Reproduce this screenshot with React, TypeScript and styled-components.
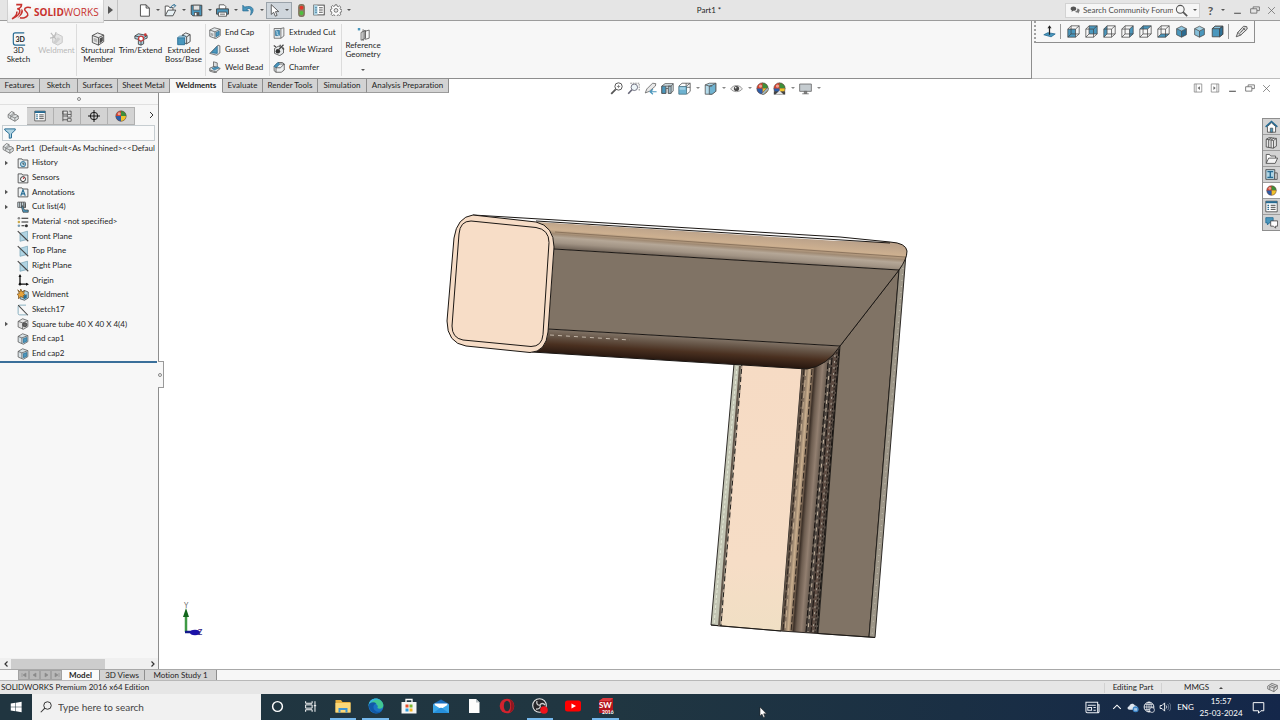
import React from "react";
import styled, { createGlobalStyle, css } from "styled-components";

const INK = "#444";
const BLUE = "#4a97bd";
const DEEP = "#256a92";
const PALE = "#b0d4e3";

const GlobalStyle = createGlobalStyle`
  *, *::before, *::after { box-sizing: border-box; }
  html, body { margin: 0; padding: 0; }
  body {
    font-family: Lato, "Open Sans", sans-serif;
    font-variant-ligatures: none;
    font-size: 8px;
    line-height: 9px;
    color: #1e1e1e;
    background: #f7f7f7;
  }
  button, input {
    font: inherit;
    font-variant-ligatures: none;
    color: inherit;
    background: none;
    border: 0;
    padding: 0;
    margin: 0;
    border-radius: 0;
  }
  svg { display: block; flex: none; }
`;

/* ---------- icons, all drawn on a 16 x 16 grid ---------- */

type Face = "front" | "back" | "left" | "right" | "top" | "bottom";

const facePoints: Record<Face, string> = {
  front: "1,5 10.5,5 10.5,15 1,15",
  back: "5,1 15,1 15,11 5,11",
  left: "1,5 5,1 5,11 1,15",
  right: "10.5,5 15,1 15,11 10.5,15",
  top: "1,5 5,1 15,1 10.5,5",
  bottom: "1,15 5,11 15,11 10.5,15",
};

const viewCube = (face: Face) => (
  <>
    <polygon points={facePoints[face]} fill={BLUE} />
    <path
      d="M1 5h9.500v10H1zM5 1h10v10H5zM1 5l4-4M10.500 5 15 1M1 15l4-4M10.500 15l4.500-4"
      fill="none"
      stroke={INK}
      strokeWidth=".9"
    />
  </>
);

const isoCube = (left: string, right: string, top: string) => (
  <>
    <path d="M2 4.500 8 7.500V15L2 12z" fill={left} />
    <path d="M14 4.500 8 7.500V15l6-3z" fill={right} />
    <path d="M2 4.500 8 1.500l6 3-6 3z" fill={top} />
    <path d="M2 4.500 8 1.500l6 3V12l-6 3-6-3zM2 4.500l6 3 6-3M8 7.500V15" fill="none" stroke={INK} strokeWidth=".9" />
  </>
);

const folder = (
  <path d="M1.500 14.500v-12h5l1 1.500h7v10.500z" fill="#eef1f2" stroke={INK} strokeWidth="1.100" />
);

const plane = (
  <>
    <path d="M4 4.500 14 1.500v11L4 15z" fill={PALE} stroke="#7aa5b8" strokeWidth="1" />
    <path d="M1 1.500 15 15" stroke={INK} strokeWidth="1.400" />
  </>
);

const ball = (
  <>
    <circle cx="8" cy="8" r="7" fill="#d9412b" />
    <path d="M8 8V1a7 7 0 0 1 7 7z" fill="#3e8f3a" />
    <path d="M8 8h7a7 7 0 0 1-7 7z" fill="#f0c22c" />
    <path d="M8 8v7a7 7 0 0 1-7-7z" fill="#2d5ea8" />
    <circle cx="5.500" cy="5" r="2" fill="#fff" opacity=".5" />
    <circle cx="8" cy="8" r="7" fill="none" stroke="#555" strokeWidth=".7" />
  </>
);

const partShape = (
  <>
    <path d="M1.500 6 6 2l3.500 1.500v3L12 6l3 2v4l-4.500 3L1.500 10z" fill="#dfe3e4" stroke="#666" strokeWidth="1" />
    <path d="M1.500 6 5 7.500l4.500-4M5 7.500v4M5 9.500l4-3M10.500 10.500v4.500M6.500 9l4 1.500L15 8" fill="none" stroke="#666" strokeWidth=".9" />
  </>
);

const icons: Record<string, React.ReactNode> = {
  newDoc: <path d="M3 1h7l4 4v10H3zM10 1v4h4" fill="#fff" stroke={INK} strokeWidth="1.100" />,
  open: (
    <>
      <path d="M1.500 14.500V2.500h4l1.500 2h4v3" fill="#fff" stroke={INK} strokeWidth="1.100" />
      <path d="M1.500 14.500 5 7.500h9.500L11 14.500z" fill="#e8f1f5" stroke={INK} strokeWidth="1.100" />
      <path d="M8 5c1-3 3-4 5-3.500M11.500 0l3 2-2.500 2.500" fill="none" stroke={DEEP} strokeWidth="1.200" />
    </>
  ),
  save: (
    <>
      <path d="M1.500 1.500h13v13h-11l-2-2z" fill={BLUE} stroke={INK} strokeWidth="1.200" />
      <path d="M4 1.500h8v6H4z" fill="#e2e2e2" stroke={INK} strokeWidth=".8" />
      <path d="M5 10h6.500v4.500H5z" fill="#555" />
      <path d="M6 11h2v3H6z" fill="#fff" />
    </>
  ),
  print: (
    <>
      <path d="M4 6V1h6l2 2v3" fill="#fff" stroke={INK} />
      <path d="M.7 6h14.600v6.500H.7z" fill={BLUE} stroke={INK} strokeWidth="1.200" />
      <path d="M3 10h10v5H3z" fill="#fff" stroke={INK} />
      <path d="M5 12.500h6" stroke={INK} />
    </>
  ),
  undo: (
    <path d="M1 1.500v7h7L5.800 6.300c4-2.200 6.700 0 4.700 7.500 6-6 3.500-13-7.300-10z" fill={BLUE} stroke={DEEP} strokeWidth=".9" />
  ),
  cursor: <path d="M4 .8v12l3-2.600 2 4.800 2.200-1-2-4.600h4z" fill="#fff" stroke={INK} strokeWidth="1" />,
  traffic: (
    <>
      <rect x="4.500" y=".5" width="7" height="15" rx="2.500" fill="#8a8066" stroke="#6b6048" />
      <circle cx="8" cy="4.500" r="2.500" fill="#e5342a" />
      <circle cx="8" cy="11.200" r="2.500" fill="#4fbf3f" />
    </>
  ),
  options: (
    <>
      <rect x="1" y="1.500" width="14" height="13" fill="#fff" stroke={INK} strokeWidth="1.200" />
      <path d="M1 1.500h5v13H1z" fill={PALE} />
      <path d="M3 5h2M3 8h2M3 11h2" stroke={DEEP} strokeWidth="1.400" />
      <path d="M8 5h5M8 8h5M8 11h5" stroke={INK} strokeWidth="1.200" />
    </>
  ),
  gear: (
    <>
      <path
        d="M6.800 1h2.400l.4 2 1.500.6 1.700-1.100 1.700 1.700-1.100 1.700.6 1.500 2 .4v2.400l-2 .4-.6 1.500 1.100 1.700-1.700 1.700-1.700-1.100-1.500.6-.4 2H6.800l-.4-2-1.500-.6-1.700 1.100-1.700-1.700 1.100-1.700L2 10.200l-1.500-.4V7.400l1.500-.4.600-1.500L1.500 3.800l1.700-1.700L4.900 3.200l1.500-.6z"
        fill="#fafafa"
        stroke={INK}
        strokeWidth=".9"
      />
      <circle cx="8" cy="8.500" r="2.500" fill="#e5e5e5" stroke={INK} strokeWidth=".9" />
    </>
  ),
  lens: (
    <>
      <circle cx="6.500" cy="6.500" r="4.800" fill="none" stroke="#555" strokeWidth="1.300" />
      <path d="m10 10 5 5" stroke="#555" strokeWidth="2" />
    </>
  ),
  chat: (
    <>
      <path d="M1 6c0-5 9-5 9 0 0 3-3 3.500-5 3.300L2.500 11 3 8.700C1.600 8 1 7 1 6z" fill="#555" />
      <path d="M8 10.500c3-.5 4-2.500 3.500-5C16 5.500 16.500 10 14 11.300l.5 2.200-2.500-1.500c-2 .3-3.300-.3-4-1.500z" fill="#777" />
    </>
  ),
  minimise: <path d="M2 13h12" stroke="#666" strokeWidth="2.200" />,
  restore: <path d="M5 6V3h10v6h-4M1 6h10v7H1z" fill="none" stroke="#666" strokeWidth="1.300" />,
  close: <path d="m2 2 12 12M14 2 2 14" stroke="#666" strokeWidth="1.300" />,
  dockLeft: (
    <>
      <path d="M2 1.500h12v13H2zM5 1.500v13" fill="none" stroke="#777" strokeWidth="1.100" />
      <path d="M11 5v6L7.500 8z" fill="#666" />
    </>
  ),
  dockRight: (
    <>
      <path d="M2 1.500h12v13H2zM11 1.500v13" fill="none" stroke="#777" strokeWidth="1.100" />
      <path d="M5.500 5v6L9 8z" fill="#666" />
    </>
  ),
  sketch3d: (
    <>
      <path d="M14 1H3.500C2 1 1.500 2 1.500 3v9c0 2 1 3 2.500 3h11" fill="none" stroke={DEEP} strokeWidth="1.300" />
      <text x="4" y="11.500" fontSize="8" fontWeight="700" fill="#222">3D</text>
    </>
  ),
  weldOff: (
    <>
      <path d="m3 5 5-3 6 3v7l-5 3-6-3z" fill="#e4e4e4" stroke="#c4c4c4" />
      <path d="m1 1 4 5M7 0 5 6M0 7l5-1 3 4" fill="none" stroke="#bcbcbc" strokeWidth="1.300" />
      <path d="m3 12 6-6 3 2-6 6z" fill="#cfcfcf" />
    </>
  ),
  structural: (
    <>
      <path d="m1.500 4 6-3 7 2.500V11l-6 4-7-3z" fill="#ececec" stroke={INK} />
      <path d="m1.500 4 7 2.500v8.500M8.500 6.500l6-3" fill="none" stroke={INK} />
      <path d="m9.800 7.500 3.700-2.200v5L9.800 13z" fill="#4d4d4d" />
      <path d="m3 6.500 4 1.500v4L3 10.500z" fill="#b5b5b5" />
    </>
  ),
  trim: (
    <>
      <path d="M1 4.500 5 2l10 2v3l-4 1.500v5L8 15l-3-1V8.500L1 7.500z" fill={PALE} stroke={INK} />
      <path d="m1 4.500 10 2L15 4M5 8.500l3 1V15" fill="none" stroke={INK} />
      <circle cx="8" cy="7.500" r="2.800" fill="#fff" stroke="#c93535" strokeWidth="1.400" />
      <circle cx="13" cy="3" r="1.500" fill="#c93535" />
    </>
  ),
  extrude: (
    <>
      <path d="m6 3.500 4-2.500 5 2v8l-4 2.500-5-2z" fill="#e9eef0" stroke={INK} />
      <path d="m6 3.500 5 2V13.500M11 5.500 15 3" fill="none" stroke={INK} />
      <path d="M.8 6.500h8v8h-8z" fill={BLUE} stroke={DEEP} />
      <path d="m.8 6.500 2-2h7l-1 2z" fill={PALE} stroke={DEEP} strokeWidth=".6" />
    </>
  ),
  endCap: (
    <>
      <path d="m1 4 6-3 8 2v8.500l-6 4-8-3z" fill="#e4eaed" stroke="#555" />
      <path d="m1 4 7 2.500V15M8 6.500 15 3" fill="none" stroke="#555" />
      <path d="m9.500 7.500 4-2v5l-4 2.500z" fill={BLUE} stroke={DEEP} />
      <path d="M3 8v3.500M5 8.500V12" stroke="#777" />
    </>
  ),
  gusset: (
    <>
      <path d="m1 12.500 11-11 2.500 1v9.500l-4 3z" fill="#e0e5e7" stroke="#555" />
      <path d="m3 11.500 8-8.500v9.500z" fill={BLUE} stroke={DEEP} />
    </>
  ),
  bead: (
    <>
      <path d="m6 1 5 1.500v6L6 7.500zM1 9.500 6 7.500l9 2.500-5.500 4.500L1 12z" fill="#d9dddf" stroke="#555" />
      <path d="m4 9.500 8-2 1.500 1.500-6.500 3z" fill={BLUE} stroke={DEEP} strokeWidth=".7" />
      <path d="M1 12v1.500L9.500 16v-1.500" fill="none" stroke="#555" />
    </>
  ),
  cut: (
    <>
      <path d="M1.500 2h9l4-1v11l-4 3h-9z" fill="#eef0f1" stroke="#555" />
      <path d="M10.500 2v13" stroke="#555" />
      <path d="M3.500 4.500h5v7h-5z" fill={BLUE} stroke={DEEP} />
      <path d="m3.500 4.500 2 1.500v4l3 1.500" fill="none" stroke="#fff" strokeWidth=".8" />
    </>
  ),
  hole: (
    <>
      <path d="m2 6 5-3 7 2v7l-5 3.500-7-3z" fill="#e6e9ea" stroke={INK} />
      <circle cx="6.500" cy="9.500" r="3" fill="#333" />
      <path d="m8 7 6-6M9 3l1-2M12 6l3 1M1 2l3 2" stroke={INK} strokeWidth="1.600" />
    </>
  ),
  chamfer: (
    <>
      <path d="m1.500 7 5-5h6l2.500 2v8l-4 3h-7l-2.500-2z" fill="#eef0f1" stroke="#444" />
      <path d="m1.500 7 5-5 2.500 2-5 5z" fill={BLUE} stroke={DEEP} />
      <path d="M4 9v6M9 4h6M4 9h6l5-5" fill="none" stroke="#444" />
    </>
  ),
  refGeo: (
    <>
      <path d="M1 0h3v3H1z" fill={BLUE} />
      <path d="M5 5.500 10 3v10l-5 2zM10 4l5-1.500v10L10 14M7.500 1.500V16" fill="none" stroke="#555" />
      <path d="M10 3v10" stroke={INK} strokeWidth="1.200" />
    </>
  ),
  normalTo: (
    <>
      <path d="m1 12 5-2.500 9 1.500-5 3.500z" fill={BLUE} stroke={DEEP} />
      <path d="M8 1v11" stroke="#222" strokeWidth="1.500" />
      <path d="M5.500 4 8 .500 10.500 4z" fill="#222" />
    </>
  ),
  iso: isoCube("#4a97bd", "#2b6b90", "#8cc4de"),
  dimetric: isoCube("#86bfd9", "#4a97bd", "#a5d2e5"),
  trimetric: (
    <>
      <path d="M1.500 4.500 5 1.500h9.500v10l-4 3h-9z" fill={BLUE} stroke={INK} />
      <path d="M1.500 4.500 5 1.500h9.500l-4 3z" fill="#8cc4de" stroke={INK} />
      <path d="M10.500 4.500v10l4-3v-10z" fill="#2f7399" stroke={INK} />
    </>
  ),
  probe: (
    <>
      <path d="M10.500 1.500 14.500 2 15 5 7 12.500 1.500 14.500 3.500 9z" fill="#ddd" stroke="#444" />
      <path d="m3.500 9 3.500 3.500M10 4l3 2.500M12 3.500 6.500 9.500" stroke="#444" fill="none" />
    </>
  ),
  zoomFit: (
    <>
      <circle cx="10.500" cy="5.500" r="4.500" fill="#fff" stroke="#555" strokeWidth="1.200" />
      <path d="M8.500 5.500h4M10.500 3.500v4" stroke="#777" />
      <path d="m7 9-5.500 5.500" stroke="#555" strokeWidth="2.200" />
    </>
  ),
  zoomArea: (
    <>
      <path d="M4 1.500h11v10" fill="none" stroke="#777" strokeDasharray="2 1" />
      <circle cx="9" cy="6.500" r="4" fill="#eef5f8" stroke="#667" strokeWidth="1.100" />
      <path d="M6 9.500 1.500 14.500" stroke="#667" strokeWidth="2" />
    </>
  ),
  previous: (
    <>
      <path d="M10.500 1.500 14.500 2 14 5 6.500 11.500 1.500 13.500 3.500 8.500z" fill="#e8e8e8" stroke="#666" />
      <path d="M15.500 12H8M11 9l-3.500 3 3.500 3" fill="none" stroke={BLUE} strokeWidth="1.500" />
    </>
  ),
  section: (
    <>
      <path d="M1 5 5 2h10v9l-3 3H9V8H6v6H1z" fill="#d6e6ed" stroke="#555" />
      <path d="M1 5h5v9H1z" fill={BLUE} stroke="#555" />
      <path d="M9 5h3.500v9H9zM12.500 5 15 2M6 5h6" fill="#9db9c6" stroke="#555" />
    </>
  ),
  orient: (
    <>
      <path d="M5 1.500h10v10l-4 3.500M10.500 5 15 1.500M5 1.500 1 5M10 1.500v9M5 6.500h10" fill="none" stroke="#555" />
      <path d="M1 5.500h9.500V15H1z" fill="#6fb3d1" stroke="#4a7284" />
      <path d="M2 6.500h7v3H2z" fill="#a3d0e3" />
    </>
  ),
  display: (
    <>
      <path d="m1.500 3.500 5-2h8v10l-5 3.500h-8z" fill="#b5dcec" stroke="#555" />
      <path d="M6.500 5v10h3.500l4.500-3.500v-10L10 4z" fill="#6fb3d1" stroke="#555" />
      <path d="M1.500 3.500 6.500 5H10" fill="none" stroke="#555" />
    </>
  ),
  eye: (
    <>
      <path d="M.8 8.500C4 3 12 3 15.200 8.500 12 13 4 13 .8 8.500z" fill="#eee" stroke="#888" />
      <circle cx="8" cy="8" r="3.200" fill="#4a4a4a" />
      <circle cx="7" cy="7" r="1" fill="#fff" />
    </>
  ),
  appearance: (
    <>
      {ball}
      <path d="m7 14 7-7 2 2-7 7z" fill="#9fb4bd" stroke="#555" strokeWidth=".7" />
    </>
  ),
  scene: (
    <>
      {ball}
      <path d="M1 11.500h14v4H1z" fill="#444" />
      <path d="m3 15.500 5-5 5 5z" fill="#e5e5e5" />
    </>
  ),
  monitor: (
    <>
      <path d="M.8 2.500h14.400v9H.8z" fill="#c5ccd0" stroke="#666" />
      <path d="M6.500 11.500h3v2.500h-3zM4 14.500h8" stroke="#666" fill="#888" />
    </>
  ),
  part: partShape,
  propList: (
    <>
      <path d="M1 1.500h14v13H1z" fill="#fff" stroke={INK} />
      <path d="M1 1.500h14V4H1z" fill={DEEP} />
      <path d="M3 6.500h2M3 9h2M3 11.500h2" stroke={DEEP} strokeWidth="1.500" />
      <path d="M7 6.500h6M7 9h6M7 11.500h6" stroke={INK} strokeWidth="1.200" />
    </>
  ),
  config: (
    <>
      <path d="M2.500 1.500h6v4h-6zM8.500 6h5v3.500h-5zM8.500 11.500h5V15h-5z" fill="#e6e6e6" stroke={INK} />
      <path d="M2.500 1v14M2.500 8h6M2.500 13h6M11 1.500h2.500V6" fill="none" stroke={INK} />
    </>
  ),
  target: (
    <>
      <circle cx="8" cy="8" r="5" fill="none" stroke="#111" strokeWidth="1.300" />
      <path d="M8 0v16M0 8h16" stroke="#111" strokeWidth="1.300" />
    </>
  ),
  ball,
  funnel: <path d="M1 2.500h14v1.500L10 9v5.500L7 15V9L1 4z" fill={PALE} stroke={DEEP} strokeWidth="1.300" />,
  history: (
    <>
      {folder}
      <circle cx="8" cy="9.500" r="3.500" fill={PALE} stroke={DEEP} strokeWidth="1.100" />
      <path d="M8 7.500v2h2" fill="none" stroke="#222" />
    </>
  ),
  sensors: (
    <>
      {folder}
      <circle cx="8" cy="9.500" r="3.300" fill="#fff" stroke="#333" strokeWidth="1.300" />
      <path d="m8 9.500 2-3" stroke="#c22" strokeWidth="1.300" />
    </>
  ),
  annotations: (
    <>
      {folder}
      <path d="m5 13 3-8 3 8M6 10.500h4" fill="none" stroke={DEEP} strokeWidth="1.500" />
    </>
  ),
  cutlist: (
    <>
      <path d="M1 1.500h10v7H1zM3.500 1.500v7M6 1.500v7M8.500 1.500v7" fill="#c8d8df" stroke={INK} />
      <path d="m7 6 3 6h5v3h-7L6 8z" fill={BLUE} stroke={INK} />
      <path d="M11 3v6" stroke={INK} strokeWidth="1.500" />
    </>
  ),
  material: (
    <>
      <circle cx="2.500" cy="3" r="1.700" fill="#888" />
      <circle cx="2.500" cy="8" r="1.700" fill="#c9a94a" />
      <circle cx="2.500" cy="13" r="1.700" fill="#7a9bb0" />
      <path d="M6 3h9M6 8h9M6 13h4" stroke="#222" strokeWidth="1.600" />
      <circle cx="12.500" cy="13" r="2" fill="#333" />
    </>
  ),
  plane,
  origin: (
    <>
      <path d="M4 2v11.500h10" fill="none" stroke="#111" strokeWidth="1.700" />
      <path d="M4 0 2 4h4zM16 13.500l-4-2v4z" fill="#111" />
      <circle cx="4" cy="13.500" r="1.700" fill="#111" />
    </>
  ),
  weldment: (
    <>
      <path d="m5 5 5-3 5 2v8l-5 3-6-2z" fill={PALE} stroke={INK} />
      <path d="m1 1 3 3 1-4 2 4 3-2-1 4 2 2-3 1 1 3-4-2-3 3V9L0 7l3-1z" fill="#e8a33a" stroke="#6b4a1c" strokeWidth=".9" />
      <path d="m9 9 4-2v5l-4 1.500z" fill={DEEP} />
    </>
  ),
  sketch: (
    <>
      <path d="M12 1.500H3.500a2 2 0 0 0-2 2v9a2 2 0 0 0 2 2H13" fill="none" stroke="#7fa9bb" strokeWidth="1.200" />
      <path d="m1.500 1.500 13 13.500" stroke={INK} strokeWidth="1.400" />
    </>
  ),
  tube: (
    <>
      <path d="m1.500 4.500 6-3.500 7 2.500v8L8.500 15l-7-3z" fill="#e2e2e2" stroke="#555" />
      <path d="m1.500 4.500 6 2 7-3M7.500 6.500V15" fill="none" stroke="#555" />
      <circle cx="10.500" cy="9" r="2.700" fill="#666" stroke="#333" />
    </>
  ),
  capItem: (
    <>
      <path d="m1.500 4.500 6-3.500 7 2.500v8L8.500 15l-7-3z" fill="#d9e2e6" stroke="#555" />
      <path d="m1.500 4.500 5 2 8-3M6.500 6.500V14" fill="none" stroke="#555" />
      <path d="m8.500 7.500 4.500-1.500v5l-4.500 2z" fill={BLUE} stroke={DEEP} />
    </>
  ),
  home: (
    <>
      <path d="M3 8v7h10V8L8 3.500z" fill="#fff" stroke={INK} />
      <path d="M.800 8.500 8 1.800l7.200 6.700" fill="none" stroke={DEEP} strokeWidth="1.800" />
      <path d="M6.500 10h3v5h-3z" fill={BLUE} stroke={INK} strokeWidth=".8" />
    </>
  ),
  library: (
    <>
      <path d="M1.500 4 5 2l9 1v9.500L10 15l-8.500-1.500z" fill="#e8e8e8" stroke={INK} />
      <path d="M4.500 5v9M7.500 5.500v9M10.500 6v9M1.500 4l9 1.500L14 3M4.500 4.500 8 2M7.500 5 11 2.500" fill="none" stroke={INK} />
    </>
  ),
  folderOpen: (
    <>
      <path d="M1.500 14V3h4l1.500 2h6v3" fill="#fff" stroke={INK} />
      <path d="m1.500 14 3-6.500h11L12.500 14z" fill="#f4f4f4" stroke={INK} />
    </>
  ),
  palette: (
    <>
      <path d="M1 2h11v12H1z" fill={PALE} stroke={INK} />
      <path d="M3 4.500h7M6.500 4.500v7M3 11.500h7" stroke={DEEP} strokeWidth="1.700" />
      <path d="M12 6h3v8h-3z" fill="#e0e0e0" stroke={INK} />
    </>
  ),
  forum: (
    <>
      <path d="M1 2h9v6.500H5L3 11V8.500H1z" fill={BLUE} stroke={DEEP} />
      <path d="M7 6h8.500v6.500H13V15l-2.500-2.500H7z" fill="#fff" stroke={INK} />
    </>
  ),
  tag: (
    <>
      <path d="m1 6 6-4 8 3v5l-5 4-9-4z" fill="#ddd" stroke="#555" />
      <path d="m3 6 8 3M5 4l8 3M10 14V9l5-4M4 11V7" fill="none" stroke="#555" />
    </>
  ),
  windows: <path d="M1 3.200 7.300 2.300v5.300H1zM8 2.200 15.500 1v6.600H8zM1 8.400h6.300v5.300L1 12.800zM8 8.400h7.500V15L8 13.800z" fill="#fff" />,
  searchBig: (
    <>
      <circle cx="10" cy="6" r="5" fill="none" stroke="#333" strokeWidth="1.300" />
      <path d="M6.500 9.500 1 15" stroke="#333" strokeWidth="1.400" />
    </>
  ),
  cortana: <circle cx="8" cy="8" r="6" fill="none" stroke="#fff" strokeWidth="1.800" />,
  taskView: (
    <path d="M2 1.500v2.500h8V1.500M2 14.500V12h8v2.500M2 6h8v4H2zM13.500 1.500v13M12 7h3" fill="none" stroke="#fff" strokeWidth="1.200" />
  ),
  explorer: (
    <>
      <path d="M.5 2h5.500l1.500 2h8v10.500H.500z" fill="#e7b040" />
      <path d="M.5 5h15v9.500H.500z" fill="#fbd878" />
      <path d="M3.500 14.500v-4.500h9v4.500h-2V12h-5v2.500z" fill="#3f95d4" />
    </>
  ),
  edge: (
    <>
      <circle cx="8" cy="8" r="7.500" fill="#1a73c4" />
      <path d="M.8 6.500C2-.5 13-1.500 15.300 6.500c.5 4-3.500 5-6 3.500 1.500-2-.5-4.500-3.300-4.500C3 5.500 1 7 .8 8z" fill="#41c793" />
      <path d="M.7 6.500C1.500 1 8-1 12 2 8 1 3 2.500.7 8z" fill="#38b5e0" />
      <path d="M.7 7C2 4 6 3.500 8.500 5.500 5 6 4.500 10 7 12.500c2 2 5 1.500 7 .2C11 17 2 16.500.7 7z" fill="#1258a6" />
    </>
  ),
  store: (
    <>
      <path d="M5 4.500V1.500h6v3" fill="none" stroke="#fff" strokeWidth="1.300" />
      <path d="M.5 4h15v11.500H.500z" fill="#f5f5f5" />
      <path d="M4.500 6.500h3v3h-3z" fill="#e8502c" />
      <path d="M8.500 6.500h3v3h-3z" fill="#7db832" />
      <path d="M4.500 10.500h3v3h-3z" fill="#2f9fe0" />
      <path d="M8.500 10.500h3v3h-3z" fill="#f6b521" />
    </>
  ),
  mail: (
    <>
      <path d="m0 6 8-4.500L16 6v9H0z" fill="#1b6fbf" />
      <path d="m1.500 5.500 13 0V10h-13z" fill="#fff" />
      <path d="m0 6 8 5 8-5v9H0z" fill="#3da8ea" />
      <path d="m0 15 8-5.500L16 15z" fill="#2690dc" />
    </>
  ),
  page: (
    <>
      <path d="M3 1h7l3.500 3.500V15H3z" fill="#fdfdfd" />
      <path d="M10 1v3.500h3.500z" fill="#b9c0c4" />
    </>
  ),
  opera: (
    <>
      <circle cx="8" cy="8" r="7.300" fill="#d3232e" />
      <ellipse cx="8" cy="8" rx="3.200" ry="5.300" fill="#22333b" />
      <path d="M10.500 1.200c6 2 6 11.600 0 13.600 2-3 2-10.600 0-13.600z" fill="#8e1720" />
    </>
  ),
  obs: (
    <>
      <circle cx="7.500" cy="7.500" r="6.800" fill="#26262a" stroke="#e5e5e5" strokeWidth="1.100" />
      <path d="M5 3c-1 3 1 4.500 3 4 1-2 3.500-2 5 0M8 7c1 2.500-1 4.500-4 4" fill="none" stroke="#cfcfcf" strokeWidth="1.300" />
      <circle cx="12" cy="12" r="3.800" fill="#f0121a" />
    </>
  ),
  youtube: (
    <>
      <rect x="0" y="2.500" width="16" height="11" rx="2.500" fill="#f00" />
      <path d="M6.500 5.500v5L11 8z" fill="#fff" />
    </>
  ),
  sw: (
    <>
      <path d="m1 3 4-3h10v12l-3 3H1z" fill="#b5161e" />
      <path d="m1 3 4-3h10l-3 3z" fill="#dd3b40" />
      <text x="1" y="10" fontSize="8" fontWeight="700" fill="#fff">SW</text>
      <text x="4" y="15.500" fontSize="5" fontWeight="700" fill="#fff">2016</text>
    </>
  ),
  news: (
    <path d="M1 2.500h12.500v11H2.500A1.500 1.500 0 0 1 1 12zM13.500 5H15v7.500a1.200 1.200 0 0 1-1.500 1M3 5.500h8.500M3 8h4v3H3zM9 8h2.500M9 11h2.500" fill="none" stroke="#e9edf3" strokeWidth="1.100" />
  ),
  chevronUp: <path d="m3 10.500 5-5 5 5" fill="none" stroke="#fff" strokeWidth="1.400" />,
  cloud: (
    <>
      <path d="M3.500 11.500C0 11.500 0 7.500 3 7c.5-4 6-4.500 7.500-1 4-.5 4.500 5.500.5 5.500z" fill="#dfe6ee" />
      <circle cx="11.500" cy="11" r="4" fill="#3d86c8" />
      <path d="M9.500 10.500h4M9.500 12h4" stroke="#fff" />
    </>
  ),
  globe: (
    <>
      <circle cx="8" cy="8" r="6.500" fill="none" stroke="#fff" strokeWidth="1.200" />
      <path d="M1.500 8h13M8 1.500v13M3 4.500h10M3 11.500h6" stroke="#fff" strokeWidth=".9" />
      <ellipse cx="8" cy="8" rx="3" ry="6.500" fill="none" stroke="#fff" strokeWidth=".9" />
      <circle cx="12" cy="12" r="3.300" fill="#16294a" stroke="#fff" strokeWidth=".9" />
    </>
  ),
  speaker: (
    <>
      <path d="M1.500 6h2.500l3.500-3.500v11L4 10H1.500z" fill="none" stroke="#fff" strokeWidth="1.200" />
      <path d="M9.500 6c1 1 1 3 0 4" fill="none" stroke="#fff" strokeWidth="1.100" />
      <path d="M11.500 4c2 2 2 6 0 8M13.500 2.500c3 3 3 8 0 11" fill="none" stroke="#7d8aa0" strokeWidth="1.100" />
    </>
  ),
  notify: <path d="M1.500 2h13v10H11l-3 3v-3H1.500z" fill="none" stroke="#fff" strokeWidth="1.200" />,
  front: viewCube("front"),
  back: viewCube("back"),
  left: viewCube("left"),
  right: viewCube("right"),
  top: viewCube("top"),
  bottom: viewCube("bottom"),
};

const Icon = ({ name, size = 13 }: { name: string; size?: number }) => (
  <svg width={size} height={size} viewBox="0 0 16 16" aria-hidden="true">
    {icons[name]}
  </svg>
);

/* ---------- shared parts ---------- */

const Caret = styled.span<{ $up?: boolean }>`
  flex: none;
  width: 0;
  height: 0;
  border: 2px solid transparent;
  ${(p) => (p.$up ? "border-bottom-color: #444; margin-bottom: 2px;" : "border-top-color: #555; margin-top: 2px;")}
`;

const IconButton = styled.button<{ $w?: number }>`
  flex: none;
  display: flex;
  align-items: center;
  justify-content: center;
  width: ${(p) => p.$w ?? 18}px;
  height: 16px;
`;

const CaretButton = styled(IconButton)`
  width: 9px;
`;

/* ---------- page frame ---------- */

const Page = styled.div`
  min-height: 100vh;
  display: flex;
  flex-direction: column;
`;

const TitleBar = styled.header`
  flex: none;
  position: relative;
  z-index: 2;
  display: flex;
  align-items: center;
  height: 21px;
  background: #e5e5e5;
  border-bottom: 1px solid #9c9c9c;
`;

const Brand = styled.div`
  align-self: flex-start;
  display: flex;
  align-items: center;
  gap: 2px;
  width: 97px;
  height: 23px;
  margin-left: 7px;
  padding: 1px 3px 0;
  background: linear-gradient(#fdfdfd, #ebebeb);
  border: 1px solid #d0d0d0;
  border-top: 0;
  color: #c8322e;
  font-family: "Open Sans", sans-serif;
  font-size: 10px;
  line-height: 20px;
`;

const BrandMenu = styled(IconButton)`
  width: 14px;
  border-right: 1px solid #c2c2c2;
  height: 20px;
`;

const QuickTools = styled.div`
  display: flex;
  align-items: center;
  margin-left: 18px;
`;

const SelectTool = styled.div`
  display: flex;
  align-items: center;
  height: 17px;
  background: #cfd6dc;
  border: 1px solid #9aa3aa;
`;

const DocTitle = styled.h1`
  flex: 1;
  margin: 0;
  text-align: center;
  font-size: 8px;
  line-height: 20px;
  font-weight: 400;
`;

const ForumSearch = styled.label`
  display: flex;
  align-items: center;
  gap: 2px;
  width: 135px;
  height: 15px;
  padding-left: 4px;
  background: #f6f6f6;
  border: 1px solid #d2d2d2;
`;

const ForumInput = styled.input`
  flex: 1;
  min-width: 0;
  margin-left: 1px;
  outline: 0;
  &::placeholder { color: #4c4c4c; opacity: 1; }
`;

const HelpButton = styled(IconButton)`
  margin-left: 3px;
  font-size: 12px;
  font-weight: 700;
  color: #555;
`;

/* ---------- ribbon ---------- */

const RibbonArea = styled.div`
  flex: none;
  display: flex;
  align-items: flex-start;
  height: 58px;
  border-bottom: 1px solid #bdbdbd;
`;

const Ribbon = styled.div`
  flex: 1;
  display: flex;
  height: 58px;
  border-right: 1px solid #8e8e8e;
  border-bottom: 1px solid #8e8e8e;
`;

const Group = styled.div`
  display: flex;
  margin: 3px 0 2px;
  border-right: 1px solid #dcdcdc;
  &:last-child { border-right: 0; }
`;

const BigTool = styled.button<{ $w: number; $raised?: boolean; $off?: boolean }>`
  display: flex;
  flex-direction: column;
  align-items: center;
  justify-content: flex-start;
  width: ${(p) => p.$w}px;
  padding-top: ${(p) => (p.$raised ? 4 : 8)}px;
  line-height: 9px;
  white-space: nowrap;
  ${(p) => p.$off && css`color: #b9b9b9;`}
`;

const DownArrow = styled(Caret)`
  margin-top: 10px;
`;

const ToolList = styled.div<{ $w: number }>`
  display: flex;
  flex-direction: column;
  width: ${(p) => p.$w}px;
`;

const SmallTool = styled.button`
  flex: 1;
  display: flex;
  align-items: center;
  gap: 4px;
  padding-left: 3px;
  white-space: nowrap;
`;

const ViewBarSlot = styled.div`
  flex: none;
  width: 248px;
  padding-left: 2px;
`;

const ViewBar = styled.div`
  display: flex;
  align-items: center;
  width: 221px;
  height: 22px;
  padding-left: 5px;
  border: 1px solid #8e8e8e;
  border-top: 0;
  border-left: 2px dotted #a0a0a0;
`;

const Divider = styled.span`
  width: 1px;
  height: 15px;
  margin: 0 3px 0 2px;
  background: #999;
`;

const TabRow = styled.nav`
  flex: none;
  display: flex;
  height: 14px;
  background: #fff;
`;

const Tab = styled.button<{ $w: number; $on?: boolean }>`
  width: ${(p) => p.$w}px;
  height: 14px;
  white-space: nowrap;
  background: ${(p) => (p.$on ? "#f7f7f7" : "#d3d3d3")};
  border-right: 1px solid #8e8e8e;
  border-bottom: 1px solid ${(p) => (p.$on ? "#f7f7f7" : "#9c9c9c")};
  font-weight: ${(p) => (p.$on ? 700 : 400)};
`;

/* ---------- workspace ---------- */

const Workspace = styled.main`
  flex: 1;
  display: flex;
  min-height: 0;
`;

const Panel = styled.aside`
  flex: none;
  position: relative;
  display: flex;
  flex-direction: column;
  width: 159px;
  border-right: 1px solid #8e8e8e;
`;

const Grip = styled.div`
  display: flex;
  align-items: center;
  justify-content: center;
  height: 12px;
  border-bottom: 1px solid #e0e0e0;
`;

const Dot = styled.span`
  width: 4px;
  height: 4px;
  border: 1px solid #888;
  border-radius: 50%;
`;

const PanelTabs = styled.div`
  display: flex;
  align-items: stretch;
  height: 18px;
  margin-top: 2px;
`;

const PanelTab = styled.button<{ $on?: boolean }>`
  display: flex;
  align-items: center;
  justify-content: center;
  width: 27px;
  background: ${(p) => (p.$on ? "#f7f7f7" : "#d3d3d3")};
  border: 1px solid ${(p) => (p.$on ? "transparent" : "#b0b0b0")};
  border-left: 0;
`;

const MoreButton = styled(IconButton)`
  margin-left: auto;
  width: 14px;
`;

const Filter = styled.label`
  display: flex;
  align-items: center;
  height: 16px;
  margin: 0 3px 0 2px;
  padding-left: 1px;
  background: #fafafa;
  border: 1px solid #c6cdd1;
`;

const FilterInput = styled.input`
  flex: 1;
  min-width: 0;
  outline: 0;
`;

const Tree = styled.ul`
  display: grid;
  grid-auto-rows: 1fr;
  height: 220px;
  margin: 0;
  padding: 0;
  list-style: none;
`;

const TreeRow = styled.li<{ $root?: boolean }>`
  display: flex;
  align-items: center;
  gap: ${(p) => (p.$root ? 2 : 3)}px;
  padding-left: ${(p) => (p.$root ? 2 : 5)}px;
  white-space: pre;
`;

const Expander = styled.button`
  display: flex;
  width: 9px;
`;

const Rollback = styled.div`
  height: 2px;
  margin-right: 1px;
  background: #3a6f9a;
`;

const SplitHandle = styled.button`
  position: absolute;
  left: 158px;
  top: 268px;
  z-index: 1;
  display: flex;
  align-items: center;
  width: 6px;
  height: 27px;
  background: #f7f7f7;
  border: 1px solid #999;
  border-left: 0;
`;

const HScroll = styled.div`
  display: flex;
  align-items: center;
  height: 11px;
  margin-top: auto;
  background: #f0f0f0;
`;

const ScrollThumb = styled.div`
  width: 94px;
  height: 10px;
  background: #cdcdcd;
`;

const ScrollButton = styled(IconButton)`
  width: 11px;
  height: 11px;
  &:last-child { margin-left: auto; }
`;

const Viewport = styled.section`
  flex: 1;
  position: relative;
  min-width: 0;
  background: #fff;
`;

const Scene = styled.svg`
  position: absolute;
  inset: 0;
  width: 100%;
  height: 100%;
`;

const HeadsUp = styled.div`
  position: absolute;
  top: -13px;
  left: 0;
  right: 8px;
  display: flex;
  justify-content: center;
`;

const HeadsUpMenu = styled(CaretButton)`
  opacity: .7;
`;

const DocButtons = styled.div`
  position: absolute;
  top: -13px;
  right: 5px;
  display: flex;
`;

const TaskPane = styled.div`
  position: absolute;
  top: 25px;
  right: 0;
  display: flex;
  flex-direction: column;
  width: 18px;
  border: 1px solid #8e8e8e;
  border-right: 0;
`;

const PaneButton = styled.button<{ $on?: boolean }>`
  display: flex;
  align-items: center;
  justify-content: center;
  height: 16px;
  background: ${(p) => (p.$on ? "#fff" : "#d3d3d3")};
  border-bottom: 1px solid #9c9c9c;
  &:last-child { border-bottom: 0; height: 15px; }
`;

const Triad = styled.svg`
  position: absolute;
  left: 20px;
  bottom: 33px;
`;

/* ---------- bottom bars ---------- */

const SheetTabs = styled.nav`
  flex: none;
  display: flex;
  height: 12px;
  border-top: 1px solid #a8a8a8;
  border-bottom: 1px solid #b8b8b8;
`;

const SheetNav = styled.div`
  display: flex;
  width: 44px;
  margin-left: 18px;
`;

const SheetNavButton = styled.button`
  flex: 1;
  display: flex;
  align-items: center;
  justify-content: center;
  background: #b9b9b9;
  border: 1px solid #a2a2a2;
`;

const SheetTab = styled.button<{ $w: number; $on?: boolean }>`
  width: ${(p) => p.$w}px;
  line-height: 9px;
  background: ${(p) => (p.$on ? "#fafafa" : "#d3d3d3")};
  border-right: 1px solid #8e8e8e;
  font-weight: ${(p) => (p.$on ? 700 : 400)};
`;

const StatusBar = styled.footer`
  flex: none;
  display: flex;
  align-items: center;
  height: 13px;
  padding: 0 2px 0 1px;
  background: #e6e6e6;
`;

const Product = styled.span`
  margin-right: auto;
`;

const StatusCell = styled.span<{ $w: number }>`
  display: flex;
  align-items: center;
  justify-content: center;
  gap: 10px;
  width: ${(p) => p.$w}px;
  height: 10px;
  border-left: 1px solid #d2d2d2;
`;

const StatusIcon = styled.span`
  margin-left: 22px;
`;

const Taskbar = styled.div`
  flex: none;
  position: relative;
  display: flex;
  height: 26px;
  background: linear-gradient(90deg, #203540 0%, #203641 48%, #1a2f44 75%, #14274a 100%);
  color: #fff;
`;

const StartButton = styled.button`
  display: flex;
  align-items: center;
  justify-content: center;
  width: 32px;
`;

const TaskSearch = styled.label`
  display: flex;
  align-items: center;
  gap: 6px;
  width: 229px;
  padding-left: 8px;
  background: #f1f1f1;
`;

const TaskInput = styled.input`
  flex: 1;
  min-width: 0;
  outline: 0;
  font-size: 10px;
  line-height: 14px;
  color: #333;
  &::placeholder { color: #444; opacity: 1; }
`;

const Apps = styled.div`
  display: grid;
  grid-template-columns: repeat(11, 1fr);
  width: 361px;
`;

const AppButton = styled.button<{ $running?: boolean }>`
  display: flex;
  align-items: center;
  justify-content: center;
  margin: 0 3px;
  border-bottom: 2px solid ${(p) => (p.$running ? "#76b9ed" : "transparent")};
`;

const Tray = styled.div`
  display: flex;
  align-items: center;
  margin-left: auto;
  padding-right: 8px;
`;

const TrayButton = styled.button<{ $w: number }>`
  display: flex;
  align-items: center;
  justify-content: center;
  width: ${(p) => p.$w}px;
  height: 26px;
`;

const Clock = styled.time`
  width: 46px;
  text-align: center;
  line-height: 12px;
`;

const Pointer = styled.svg`
  position: absolute;
  left: 759px;
  top: 12px;
`;

/* ---------- data ---------- */

const quickTools = [
  ["newDoc", "New"],
  ["open", "Open"],
  ["save", "Save"],
  ["print", "Print"],
  ["undo", "Undo"],
];

const ribbonTabs: [string, number][] = [
  ["Features", 40],
  ["Sketch", 38],
  ["Surfaces", 40],
  ["Sheet Metal", 52],
  ["Weldments", 53],
  ["Evaluate", 40],
  ["Render Tools", 55],
  ["Simulation", 49],
  ["Analysis Preparation", 82],
];

const viewIcons = ["front", "back", "left", "right", "top", "bottom", "iso", "dimetric", "trimetric"];

const headsUp: [string, boolean][] = [
  ["zoomFit", false],
  ["zoomArea", false],
  ["previous", false],
  ["section", false],
  ["orient", true],
  ["display", true],
  ["eye", true],
  ["appearance", false],
  ["scene", true],
  ["monitor", true],
];

const tree: { icon: string; text: string; open?: boolean }[] = [
  { icon: "history", text: "History", open: true },
  { icon: "sensors", text: "Sensors" },
  { icon: "annotations", text: "Annotations", open: true },
  { icon: "cutlist", text: "Cut list(4)", open: true },
  { icon: "material", text: "Material <not specified>" },
  { icon: "plane", text: "Front Plane" },
  { icon: "plane", text: "Top Plane" },
  { icon: "plane", text: "Right Plane" },
  { icon: "origin", text: "Origin" },
  { icon: "weldment", text: "Weldment" },
  { icon: "sketch", text: "Sketch17" },
  { icon: "tube", text: "Square tube 40 X 40 X 4(4)", open: true },
  { icon: "capItem", text: "End cap1" },
  { icon: "capItem", text: "End cap2" },
];

const apps: [string, boolean][] = [
  ["cortana", false],
  ["taskView", false],
  ["explorer", true],
  ["edge", true],
  ["store", false],
  ["mail", false],
  ["page", false],
  ["opera", false],
  ["obs", true],
  ["youtube", false],
  ["sw", true],
];

/* ---------- weldment model ---------- */

const Model = () => (
  <Scene viewBox="159 93 1121 576" role="img" aria-label="Weldment model">
    <defs>
      <linearGradient id="topBand" gradientUnits="userSpaceOnUse" x1="700" y1="231" x2="698" y2="258">
        <stop offset="0" stopColor="#bba28a" />
        <stop offset=".35" stopColor="#cdb090" />
        <stop offset=".5" stopColor="#a08a73" />
        <stop offset=".62" stopColor="#b5a797" />
        <stop offset=".82" stopColor="#a19384" />
        <stop offset="1" stopColor="#786b5f" />
      </linearGradient>
      <linearGradient id="lowBand" gradientUnits="userSpaceOnUse" x1="700" y1="337" x2="698.500" y2="363">
        <stop offset="0" stopColor="#85786b" />
        <stop offset=".3" stopColor="#655446" />
        <stop offset=".6" stopColor="#4a3020" />
        <stop offset="1" stopColor="#24150e" />
      </linearGradient>
      <linearGradient id="legBand" gradientUnits="userSpaceOnUse" x1="802" y1="369" x2="839" y2="372">
        <stop offset="0" stopColor="#55483d" />
        <stop offset=".1" stopColor="#7c6a5a" />
        <stop offset=".2" stopColor="#cbb08f" />
        <stop offset=".28" stopColor="#8d7660" />
        <stop offset=".34" stopColor="#3c3028" />
        <stop offset=".42" stopColor="#6d5d50" />
        <stop offset=".55" stopColor="#927f70" />
        <stop offset=".66" stopColor="#6f6155" />
        <stop offset=".72" stopColor="#4a443f" />
        <stop offset=".85" stopColor="#5f4c42" />
        <stop offset="1" stopColor="#57524b" />
      </linearGradient>
      <linearGradient id="peach" x1="0" y1="0" x2="0" y2="1">
        <stop offset="0" stopColor="#f6dbc4" />
        <stop offset=".75" stopColor="#f6ddc6" />
        <stop offset="1" stopColor="#f0dfc4" />
      </linearGradient>
    </defs>

    <g stroke="#1b1714" strokeWidth=".9" strokeLinejoin="round">
      <path d="M734 364 711 625l10 1 21-262z" fill="#c3c5b4" />
      <path d="m742 364-21 262 60 5 21-264z" fill="url(#peach)" />
      <path d="m802 366-21 265 37 2.500L841 346z" fill="url(#legBand)" stroke="none" />
      <path d="m899 270-59 76-22 287.500 51 3.500z" fill="#807365" />
      <path d="m906 254-7 16-30 367 6 .5z" fill="#9d9688" />
      <path d="m711 625 70 6 37 2.500 57 4" fill="none" />
    </g>

    <g fill="none" strokeWidth="1">
      <path d="m737 366-23 259" stroke="#e4ead7" strokeDasharray="3 2" />
      <path d="m740 366-21 260" stroke="#62564b" strokeWidth="2" />
      <path d="m742 366-21 260" stroke="#f6dcc5" strokeDasharray="3 5" />
      <path d="m804 369-21 262M812 369l-21 263" stroke="#2d241e" strokeDasharray="6 2" />
      <path d="m806 369-21 262" stroke="#c9b193" strokeDasharray="7 4" />
      <path d="m828 363-22 269" stroke="#15110f" strokeDasharray="6 2" />
      <path d="m830 360-22 272" stroke="#c8b7a1" strokeDasharray="4 4" />
      <path d="m832 358-21 274M839 349l-22 284" stroke="#15110f" strokeDasharray="7 2" />
      <path d="m835 355-22 277" stroke="#aba79b" strokeDasharray="2 4" />
      <path d="m837 352-22 281" stroke="#211a16" strokeDasharray="2 2" />
      <path d="m903 268-31 369" stroke="#c6c2b3" strokeDasharray="1 5" />
    </g>

    <g strokeLinejoin="round">
      <path d="M470 215 536 222l354 20q16 1 17 9 0 8-8 19L554 249z" fill="url(#topBand)" />
      <path d="M500 217 840 238l50 4.500-60-2-280-18z" fill="#fff" />
      <path d="m554 249 345 21-59 76-292-17z" fill="#807365" />
      <path d="m548 329 292 17q-13 20-33 23l-275-17z" fill="url(#lowBand)" />
      <g fill="none" stroke="#1b1714" strokeWidth="1">
        <path d="m473 215 367 22 50 5q16 1 17 9 0 8-8 19l-59 76q-13 20-33 23l-275-17" />
        <path d="m536 221 354 22M554 249l345 21M548 329l292 17" />
        <path d="m555 232 350 25" stroke="#806a54" strokeWidth=".8" />
        <path d="m550 335 80 5" stroke="#d8cdbf" strokeDasharray="4 4" strokeWidth=".8" />
      </g>
      <path
        d="M473 215 536 222q18 4 18 25l-6 85q-2 20-18 20.500L466 346q-19-3-19-25l7-83q3-21 19-23z"
        fill="#f6dcc6"
        stroke="#1b1714"
        strokeWidth="1"
      />
      <path
        d="m471 221 65 6.500q13 2 13 15l-6 92q-1 12-12 12L463 340q-11-2-11-14l7-92q1-13 12-13z"
        fill="#f7ddc7"
        stroke="#1b1714"
        strokeWidth="1"
      />
    </g>
  </Scene>
);

export default function App() {
  return (
    <Page>
      <GlobalStyle />
      <TitleBar>
        <Brand>
          <svg width="21" height="20" viewBox="0 0 20 18" aria-hidden="true">
            <path
              d="M5 2h5c0 2-2 3.500-4 4 3 0 3 3 1 5.500S2 15 1 15.500c3-2 5-5 4.500-7M19 5c-3-1-6-.5-6 1.500s4 3 3 5.500-5 3-7.500 2.500"
              fill="none"
              stroke="#c8322e"
              strokeWidth="1.500"
            />
            <path d="M10 6c3 2 1 6-4 9 3-3 4-6 4-9z" fill="#c8322e" />
          </svg>
          <span><b>SOLID</b>WORKS</span>
        </Brand>
        <BrandMenu aria-label="Menu">
          <svg width="5" height="8" viewBox="0 0 5 8"><path d="M0 0v8l5-4z" fill="#555" /></svg>
        </BrandMenu>
        <QuickTools>
          {quickTools.map(([icon, label]) => (
            <React.Fragment key={icon}>
              <IconButton $w={17} aria-label={label}><Icon name={icon} /></IconButton>
              <CaretButton aria-label={label + " options"}><Caret /></CaretButton>
            </React.Fragment>
          ))}
          <SelectTool>
            <IconButton $w={15} aria-label="Select"><Icon name="cursor" /></IconButton>
            <CaretButton aria-label="Select options"><Caret /></CaretButton>
          </SelectTool>
          <IconButton aria-label="Rebuild"><Icon name="traffic" /></IconButton>
          <IconButton $w={17} aria-label="File properties"><Icon name="options" size={12} /></IconButton>
          <IconButton $w={17} aria-label="Options"><Icon name="gear" size={12} /></IconButton>
          <CaretButton aria-label="More options"><Caret /></CaretButton>
        </QuickTools>
        <DocTitle>Part1 *</DocTitle>
        <ForumSearch>
          <Icon name="chat" size={10} />
          <ForumInput placeholder="Search Community Forum" aria-label="Search Community Forum" />
          <Icon name="lens" />
          <CaretButton aria-label="Search options"><Caret /></CaretButton>
        </ForumSearch>
        <HelpButton $w={15} aria-label="Help">?</HelpButton>
        <CaretButton aria-label="Help options"><Caret /></CaretButton>
        <IconButton $w={20} aria-label="Minimise"><Icon name="minimise" size={9} /></IconButton>
        <IconButton $w={15} aria-label="Restore"><Icon name="restore" size={10} /></IconButton>
        <IconButton $w={18} aria-label="Close"><Icon name="close" size={9} /></IconButton>
      </TitleBar>

      <RibbonArea>
        <Ribbon>
          <Group>
            <BigTool $w={37}><Icon name="sketch3d" size={14} /><span>3D<br />Sketch</span></BigTool>
            <BigTool $w={39} $off disabled><Icon name="weldOff" size={14} />Weldment</BigTool>
          </Group>
          <Group>
            <BigTool $w={42}><Icon name="structural" size={14} /><span>Structural<br />Member</span></BigTool>
            <BigTool $w={43}><Icon name="trim" size={14} />Trim/Extend</BigTool>
            <BigTool $w={43}><Icon name="extrude" size={14} /><span>Extruded<br />Boss/Base</span></BigTool>
          </Group>
          <Group>
            <ToolList $w={63}>
              <SmallTool><Icon name="endCap" size={12} />End Cap</SmallTool>
              <SmallTool><Icon name="gusset" size={12} />Gusset</SmallTool>
              <SmallTool><Icon name="bead" size={12} />Weld Bead</SmallTool>
            </ToolList>
          </Group>
          <Group>
            <ToolList $w={71}>
              <SmallTool><Icon name="cut" size={12} />Extruded Cut</SmallTool>
              <SmallTool><Icon name="hole" size={12} />Hole Wizard</SmallTool>
              <SmallTool><Icon name="chamfer" size={12} />Chamfer</SmallTool>
            </ToolList>
          </Group>
          <Group>
            <BigTool $w={42} $raised>
              <Icon name="refGeo" size={13} />
              <span>Reference<br />Geometry</span>
              <DownArrow />
            </BigTool>
          </Group>
        </Ribbon>
        <ViewBarSlot>
          <ViewBar>
            <IconButton $w={17} aria-label="Normal to"><Icon name="normalTo" /></IconButton>
            <Divider />
            {viewIcons.map((v) => (
              <IconButton key={v} aria-label={v}><Icon name={v} /></IconButton>
            ))}
            <Divider />
            <IconButton aria-label="View selector"><Icon name="probe" /></IconButton>
          </ViewBar>
        </ViewBarSlot>
      </RibbonArea>

      <TabRow>
        {ribbonTabs.map(([name, w]) => (
          <Tab key={name} $w={w} $on={name === "Weldments"}>{name}</Tab>
        ))}
      </TabRow>

      <Workspace>
        <Panel>
          <Grip><Dot /></Grip>
          <PanelTabs>
            {["part", "propList", "config", "target", "ball"].map((n, i) => (
              <PanelTab key={n} $on={i === 0} aria-label={n}><Icon name={n} size={12} /></PanelTab>
            ))}
            <MoreButton aria-label="More tabs">
              <svg width="5" height="8" viewBox="0 0 5 8"><path d="m1 1 3 3-3 3" fill="none" stroke="#333" /></svg>
            </MoreButton>
          </PanelTabs>
          <Filter>
            <Icon name="funnel" size={12} />
            <FilterInput aria-label="Filter" />
          </Filter>
          <Tree>
            <TreeRow $root>
              <Icon name="part" size={12} />
              <span>{"Part1  (Default<As Machined><<Defaul"}</span>
            </TreeRow>
            {tree.map((row) => (
              <TreeRow key={row.text}>
                <Expander aria-label={row.text} disabled={!row.open}>
                  {row.open && (
                    <svg width="3" height="6" viewBox="0 0 4 6"><path d="M0 0v6l4-3z" fill="#555" /></svg>
                  )}
                </Expander>
                <Icon name={row.icon} size={12} />
                <span>{row.text}</span>
              </TreeRow>
            ))}
          </Tree>
          <Rollback />
          <SplitHandle aria-label="Collapse panel"><Dot /></SplitHandle>
          <HScroll>
            <ScrollButton aria-label="Scroll left">
              <svg width="4" height="6" viewBox="0 0 4 6"><path d="M3.500.500 1 3l2.500 2.500" fill="none" stroke="#333" strokeWidth="1.200" /></svg>
            </ScrollButton>
            <ScrollThumb />
            <ScrollButton aria-label="Scroll right">
              <svg width="4" height="6" viewBox="0 0 4 6"><path d="M.500.500 3 3 .500 5.500" fill="none" stroke="#333" strokeWidth="1.200" /></svg>
            </ScrollButton>
          </HScroll>
        </Panel>

        <Viewport>
          <Model />
          <HeadsUp>
            {headsUp.map(([n, menu]) => (
              <React.Fragment key={n}>
                <IconButton $w={17} aria-label={n}><Icon name={n} /></IconButton>
                {menu && <HeadsUpMenu aria-label={n + " options"}><Caret /></HeadsUpMenu>}
              </React.Fragment>
            ))}
          </HeadsUp>
          <DocButtons>
            <IconButton $w={17} aria-label="Previous pane"><Icon name="dockLeft" size={10} /></IconButton>
            <IconButton $w={18} aria-label="Next pane"><Icon name="dockRight" size={10} /></IconButton>
            <IconButton $w={17} aria-label="Minimise document"><Icon name="minimise" size={9} /></IconButton>
            <IconButton $w={17} aria-label="Restore document"><Icon name="restore" size={10} /></IconButton>
            <IconButton $w={17} aria-label="Close document"><Icon name="close" size={9} /></IconButton>
          </DocButtons>
          <TaskPane>
            {["home", "library", "folderOpen", "palette", "ball", "propList", "forum"].map((n) => (
              <PaneButton key={n} $on={n === "ball"} aria-label={n}><Icon name={n} size={n === "ball" ? 11 : 13} /></PaneButton>
            ))}
          </TaskPane>
          <Triad width="28" height="36" viewBox="0 0 28 36" aria-label="Axes">
            <text x="5" y="8" fontSize="7" fill="#666">Y</text>
            <path d="M7 32V17" stroke="#3f9a45" strokeWidth="2.500" />
            <path d="M7 8 4 17h6z" fill="#12661c" />
            <path d="M6 32h10" stroke="#141a8c" strokeWidth="2.500" />
            <ellipse cx="16" cy="32.500" rx="5" ry="2.800" fill="#1b12a8" />
            <text x="19" y="35" fontSize="7" fontWeight="700" fill="#3a2b86">Z</text>
          </Triad>
        </Viewport>
      </Workspace>

      <SheetTabs>
        <SheetNav>
          {["M5 1v4L2 3zM1 1v4", "M4 1v4L1 3z", "M2 1v4l3-2z", "M1 1v4l3-2zM5 1v4"].map((d, i) => (
            <SheetNavButton key={d} aria-label={"Sheet step " + (i + 1)}>
              <svg width="6" height="6" viewBox="0 0 6 6"><path d={d} fill="#8a8a8a" stroke="#8a8a8a" strokeWidth=".6" /></svg>
            </SheetNavButton>
          ))}
        </SheetNav>
        <SheetTab $w={38} $on>Model</SheetTab>
        <SheetTab $w={45}>3D Views</SheetTab>
        <SheetTab $w={72}>Motion Study 1</SheetTab>
      </SheetTabs>

      <StatusBar>
        <Product>SOLIDWORKS Premium 2016 x64 Edition</Product>
        <StatusCell $w={57}>Editing Part</StatusCell>
        <StatusCell $w={84}>MMGS <Caret $up /></StatusCell>
        <StatusIcon><Icon name="tag" size={11} /></StatusIcon>
      </StatusBar>

      <Taskbar>
        <StartButton aria-label="Start"><Icon name="windows" size={12} /></StartButton>
        <TaskSearch>
          <Icon name="searchBig" size={12} />
          <TaskInput placeholder="Type here to search" aria-label="Type here to search" />
        </TaskSearch>
        <Apps>
          {apps.map(([n, running]) => (
            <AppButton key={n} $running={running} aria-label={n}>
              <Icon name={n} size={n === "cortana" || n === "taskView" ? 13 : 16} />
            </AppButton>
          ))}
        </Apps>
        <Pointer width="8" height="12" viewBox="0 0 8 12" aria-hidden="true">
          <path d="M1 1v9l2-1.800L4.500 11.500 6 11 4.700 7.800H7.500z" fill="#fff" stroke="#222" strokeWidth=".6" />
        </Pointer>
        <Tray>
          <TrayButton $w={32} aria-label="News"><Icon name="news" size={15} /></TrayButton>
          <TrayButton $w={17} aria-label="Hidden icons"><Icon name="chevronUp" size={12} /></TrayButton>
          <TrayButton $w={16} aria-label="Cloud"><Icon name="cloud" size={12} /></TrayButton>
          <TrayButton $w={16} aria-label="Network"><Icon name="globe" size={12} /></TrayButton>
          <TrayButton $w={16} aria-label="Volume"><Icon name="speaker" size={12} /></TrayButton>
          <TrayButton $w={25} aria-label="Language">ENG</TrayButton>
          <Clock>15:57<br />25-03-2024</Clock>
          <TrayButton $w={28} aria-label="Notifications"><Icon name="notify" size={13} /></TrayButton>
        </Tray>
      </Taskbar>
    </Page>
  );
}
